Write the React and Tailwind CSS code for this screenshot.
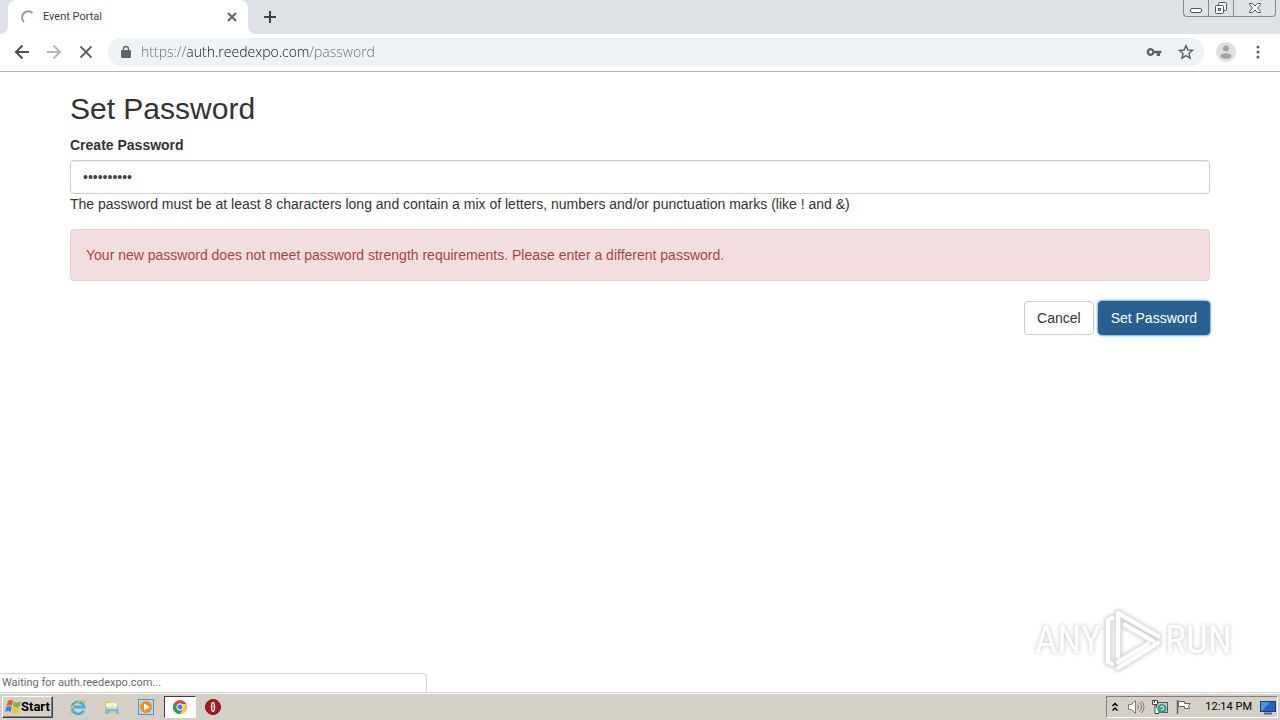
import { useState } from "react";

const uiFont = "font-[Roboto,sans-serif]";

function TabStrip() {
  return (
    <header className={`flex h-[34px] items-stretch justify-between bg-[#dee1e6] ${uiFont}`}>
      <div className="flex items-stretch">
        <div className="w-2 bg-white">
          <div className="h-full rounded-br-lg bg-[#dee1e6]" />
        </div>
        <div className="flex w-60 items-center rounded-t-lg bg-white pr-[10px] pl-3">
          <svg width="16" height="16" viewBox="0 0 16 16" fill="none" stroke="#9a9a9a" strokeWidth="2">
            <path d="M4 13A6 6 0 0 1 12.500 4" />
          </svg>
          <span className="ml-[7px] flex-1 pt-px text-[11px] text-[#3c4043]">Event Portal</span>
          <button type="button" aria-label="Close tab">
            <svg width="12" height="12" viewBox="0 0 12 12" stroke="#5f6368" strokeWidth="1.8">
              <path d="M2 2l8 8M10 2l-8 8" />
            </svg>
          </button>
        </div>
        <div className="w-2 bg-white">
          <div className="h-full rounded-bl-lg bg-[#dee1e6]" />
        </div>
        <button type="button" aria-label="New tab" className="ml-[7px]">
          <svg width="14" height="14" viewBox="0 0 14 14" stroke="#3c4043" strokeWidth="2">
            <path d="M7 1v12M1 7h12" />
          </svg>
        </button>
      </div>
      <div className="mr-1 flex h-[17px] divide-x divide-[#85888f] rounded-b border border-t-0 border-[#85888f]">
        <button type="button" aria-label="Minimize" className="flex w-[25px] justify-center">
          <svg width="14" height="16" viewBox="0 0 14 16" fill="#fff" stroke="#51555d">
            <rect x="1.500" y="8.500" width="11" height="4" rx="1.500" />
          </svg>
        </button>
        <button type="button" aria-label="Restore" className="flex w-[25px] justify-center">
          <svg width="14" height="16" viewBox="0 0 14 16" fill="#f5f6f8" stroke="#51555d">
            <rect x="4.500" y="2.500" width="8" height="8" rx="1" />
            <rect x="1.500" y="5.500" width="8" height="8" rx="1" />
            <rect x="4.500" y="8.500" width="2" height="2" />
          </svg>
        </button>
        <button type="button" aria-label="Close" className="flex w-[41px] justify-center">
          <svg width="14" height="16" viewBox="0 0 14 16" fill="#fff" stroke="#51555d">
            <path d="M1.500 3.500h3L7 6l2.500-2.500h3v1L9.500 8l3 3.500v1h-3L7 10l-2.500 2.500h-3v-1l3-3.500-3-3.500z" />
          </svg>
        </button>
      </div>
    </header>
  );
}

function Toolbar() {
  const [url, setUrl] = useState("https://auth.reedexpo.com/password");

  return (
    <nav className={`flex h-[38px] items-center border-b border-[#b4b4b4] bg-white px-[14px] pb-px ${uiFont}`}>
      <button type="button" aria-label="Back">
        <svg width="16" height="16" viewBox="0 0 16 16" fill="none" stroke="#505357" strokeWidth="2">
          <path d="M15 8H2M8.500 1.500L2 8l6.500 6.500" />
        </svg>
      </button>
      <button type="button" aria-label="Forward" className="ml-4">
        <svg width="16" height="16" viewBox="0 0 16 16" fill="none" stroke="#b5b6b8" strokeWidth="2">
          <path d="M1 8h13M7.500 1.500L14 8l-6.500 6.500" />
        </svg>
      </button>
      <button type="button" aria-label="Stop" className="ml-4">
        <svg width="16" height="16" viewBox="0 0 16 16" stroke="#5f6368" strokeWidth="1.900">
          <path d="M2.500 2.500l11 11M13.500 2.500l-11 11" />
        </svg>
      </button>
      <div className="ml-[14px] flex h-7 flex-1 items-center rounded-full bg-[#f0f3f5] pr-[10px] pl-3">
        <svg width="12" height="14" viewBox="0 0 12 14" fill="none" stroke="#5f6368">
          <rect x="1.500" y="5.500" width="9" height="7" rx=".5" fill="#5f6368" />
          <path d="M3.500 5.500V4a2.500 2.500 0 0 1 5 0v1.500" strokeWidth="1.400" />
        </svg>
        {/* the host part of the address is darker than the scheme and path */}
        <input
          type="text"
          aria-label="Address"
          value={url}
          onChange={(e) => setUrl(e.target.value)}
          className="ml-[9px] min-w-0 flex-1 bg-[linear-gradient(90deg,#65696d_47px,#101114_47px,#101114_169px,#65696d_169px)] bg-clip-text font-['Open_Sans',sans-serif] text-sm font-light text-transparent outline-none"
        />
        <button type="button" aria-label="Saved passwords">
          <svg width="16" height="16" viewBox="0 0 24 24" fill="#5f6368">
            <path d="M12.650 10A6 6 0 0 0 7 6a6 6 0 1 0 5.650 8H16v4h5v-4h2v-4H12.650zM7 14.500a2.500 2.500 0 1 1 0-5 2.500 2.500 0 0 1 0 5z" />
          </svg>
        </button>
        <button type="button" aria-label="Bookmark this page" className="ml-4">
          <svg width="16" height="16" viewBox="0 0 16 16" fill="none" stroke="#5f6368" strokeWidth="1.500">
            <path d="M8 1.700l1.900 4.300 4.600.4-3.500 3.100 1.100 4.600L8 11.700l-4.100 2.400L5 9.500 1.500 6.400l4.600-.4z" />
          </svg>
        </button>
      </div>
      <button type="button" aria-label="Profile" className="ml-3">
        <svg width="20" height="20" viewBox="0 0 20 20">
          <circle cx="10" cy="10" r="10" fill="#dfdfdf" />
          <circle cx="10" cy="6.500" r="3" fill="#a3a3a3" />
          <ellipse cx="10" cy="14" rx="5.500" ry="2.700" fill="#a3a3a3" />
        </svg>
      </button>
      <button type="button" aria-label="Menu" className="ml-[14px]">
        <svg width="16" height="16" viewBox="0 0 16 16" fill="#5f6368">
          <circle cx="8" cy="3" r="1.500" />
          <circle cx="8" cy="8" r="1.500" />
          <circle cx="8" cy="13" r="1.500" />
        </svg>
      </button>
    </nav>
  );
}

function PasswordForm() {
  const [password, setPassword] = useState("Portal2019");

  return (
    <form
      onSubmit={(e) => e.preventDefault()}
      className="mx-auto w-full max-w-[1170px] px-[15px] pt-5 font-['Liberation_Sans',Arial,sans-serif] text-sm leading-5 text-[#333]"
    >
      <h1 className="mb-[10px] text-[30px] leading-[33px]">Set Password</h1>
      <label htmlFor="password" className="mb-[5px] block font-bold">
        Create Password
      </label>
      <input
        id="password"
        type="password"
        value={password}
        onChange={(e) => setPassword(e.target.value)}
        className="block h-[34px] w-full rounded border border-[#ccc] px-3 text-sm text-[#444] shadow-[inset_0_1px_1px_rgba(0,0,0,0.075)] outline-none"
      />
      <p className="mb-[15px]">
        The password must be at least 8 characters long and contain a mix of letters, numbers and/or punctuation marks (like ! and &amp;)
      </p>
      <div role="alert" className="mb-5 rounded border border-[#ebccd1] bg-[#f2dede] p-[15px] text-[#a94442]">
        Your new password does not meet password strength requirements. Please enter a different password.
      </div>
      <div className="flex justify-end gap-1">
        <button type="button" className="h-[34px] rounded border border-[#ccc] bg-white px-3">
          Cancel
        </button>
        <button
          type="submit"
          className="h-[34px] rounded border border-[#286090] bg-[#286090] px-3 text-white shadow-[0_0_2px_1px_#66afe9]"
        >
          Set Password
        </button>
      </div>
    </form>
  );
}

function Watermark() {
  return (
    <div className="absolute right-12 bottom-5 flex items-center gap-[2px] font-['Roboto_Condensed','Liberation_Sans_Narrow',sans-serif] text-[39px] leading-none text-white drop-shadow-[0_0_2px_rgba(0,0,0,0.25)]">
      <span>ANY</span>
      <svg width="60" height="64" viewBox="0 0 60 64" fill="none" strokeLinejoin="round" strokeLinecap="round">
        <g stroke="#e2e2e2" strokeWidth="6">
          <path d="M9 10L5 12v42l4 2" />
          <path d="M15 48V5l40 23" />
          <path d="M22 17l28 16" />
          <path d="M15 60l40-25" />
          <path d="M15 54l30-18" />
        </g>
        <g stroke="#fff" strokeWidth="4">
          <path d="M9 10L5 12v42l4 2" />
          <path d="M15 48V5l40 23" />
          <path d="M22 17l28 16" />
          <path d="M15 60l40-25" />
          <path d="M15 54l30-18" />
        </g>
      </svg>
      <span>RUN</span>
    </div>
  );
}

function QuickLaunch() {
  return (
    <div className="ml-4 flex items-center">
      <button type="button" aria-label="Internet Explorer" className="mr-4">
        <svg width="18" height="18" viewBox="0 0 18 18" fill="none">
          <path d="M14.500 12.500A6 6 0 1 1 15 9H5" stroke="#45ade3" strokeWidth="2.800" />
          <path d="M3 15.500C-1 17 1 10 7 5.500S18 1 15.500 5.500" stroke="#e6bd4b" strokeWidth="1.300" />
        </svg>
      </button>
      <button type="button" aria-label="Windows Explorer" className="mr-4">
        <svg width="18" height="18" viewBox="0 0 18 18">
          <path d="M2 3h5l1 2h7v10H2z" fill="#e8c25d" />
          <path d="M3 5h11v5H3z" fill="#fff3b5" />
          <path d="M3 9h12l1 7h-3v-3H6v3H2z" fill="#6dbce0" />
          <path d="M4 9h10v2H4z" fill="#b5e5f5" />
        </svg>
      </button>
      <button type="button" aria-label="Media Player" className="mr-[9px]">
        <svg width="18" height="18" viewBox="0 0 18 18">
          <rect x="1.500" y="1.500" width="15" height="15" fill="#b5d9f0" stroke="#4f94c4" />
          <circle cx="9" cy="9" r="6" fill="#f28c19" />
          <path d="M7 5.500l6 3.500-6 3.500z" fill="#fff" />
        </svg>
      </button>
      <button
        type="button"
        aria-label="Chrome"
        className="flex h-[22px] w-8 items-center justify-center border border-t-[#404040] border-r-white border-b-white border-l-[#404040] bg-white"
      >
        <svg width="14" height="14" viewBox="0 0 14 14">
          <circle cx="7" cy="7" r="7" fill="#dd4b3e" />
          <path d="M.9 3.500A7 7 0 0 0 7 14l3-5.500-6 0z" fill="#22a45d" />
          <path d="M13.200 4A7 7 0 0 1 7 14l3-5L8 4z" fill="#fccd3b" />
          <circle cx="7" cy="7" r="3.200" fill="#4486f0" stroke="#fff" />
        </svg>
      </button>
      <button type="button" aria-label="Opera" className="ml-[9px]">
        <svg width="16" height="16" viewBox="0 0 16 16">
          <circle cx="8" cy="8" r="7.500" fill="#b5121b" stroke="#76110f" />
          <ellipse cx="8" cy="8" rx="2.200" ry="5" fill="#fff" />
          <path d="M8 4.500v7" stroke="#8c1116" strokeWidth="1.200" />
        </svg>
      </button>
    </div>
  );
}

function Tray() {
  return (
    <div className="flex h-[22px] items-center border border-t-[#808080] border-r-white border-b-white border-l-[#808080] pr-px pl-1 text-black">
      <svg width="8" height="12" viewBox="0 0 8 12" fill="none" stroke="#000" strokeWidth="1.500">
        <path d="M1.500 5L4 2.500 6.500 5M1.500 9.500L4 7l2.500 2.500" />
      </svg>
      <svg className="ml-2" width="18" height="16" viewBox="0 0 18 16" fill="none" stroke="#777">
        <path d="M1.500 5.500h3l4-4v13l-4-4h-3z" fill="#fff" />
        <path d="M10.500 5.500q2 2.500 0 5M12.500 3.500q4 4.500 0 9M14.500 2q5 6 0 12" />
      </svg>
      <svg className="ml-[7px]" width="16" height="16" viewBox="0 0 16 16" fill="none" stroke="#555">
        <rect x="4.500" y="3.500" width="11" height="10" fill="#a9d3d8" />
        <path d="M.5 1.500h5v4h-5zM3 5.500v9h4" fill="#fff" stroke="#444" />
        <path d="M2.500 1v3" stroke="#444" />
        <circle cx="10" cy="9.500" r="4" fill="#35a57c" stroke="#39839a" />
        <path d="M8 8l3-1 1 3-3 1" stroke="#d8f3e5" />
      </svg>
      <svg className="ml-2" width="16" height="16" viewBox="0 0 16 16" fill="#fff" stroke="#666">
        <path d="M1.500 1v14" strokeWidth="1.500" />
        <path d="M2.500 2.500h6v2h6l-2 2 1 3h-5v-2h-6z" />
      </svg>
      <span className="ml-[13px] pt-px text-[11px]">12:14 PM</span>
      <svg className="ml-2" width="16" height="16" viewBox="0 0 16 16">
        <rect x=".5" y="2.500" width="15" height="10" fill="#2464bd" stroke="#173d75" />
        <path d="M1 3h9L2 12H1z" fill="#5594df" />
        <path d="M4 14.500h8" stroke="#496281" strokeWidth="2" />
      </svg>
    </div>
  );
}

function Taskbar() {
  return (
    <footer className={`border-t border-[#d4d0c8] ${uiFont}`}>
      <div className="flex h-[27px] items-center justify-between border-t border-white bg-[#d4d0c8] px-[2px]">
        <div className="flex items-center">
          <button
            type="button"
            className="flex h-[22px] items-center border border-t-white border-r-[#404040] border-b-[#404040] border-l-white px-[2px] text-[13px] font-bold text-black shadow-[inset_-1px_-1px_#808080]"
          >
            <svg width="16" height="16" viewBox="0 0 16 16">
              <path d="M3 2q3-2 5 0L7 7Q5 5.500 1.500 7z" fill="#e65c27" />
              <path d="M9 2.500q3 2 7 0L14.500 8q-3 1.500-6.500-.5z" fill="#75b843" />
              <path d="M1.200 8q3-1.500 5.500 0l-1 5q-2-2-5.500 0z" fill="#3a83cb" />
              <path d="M7.700 8.500q3 2 6.500.5l-1.500 5q-3 2-6 0z" fill="#f5c22c" />
            </svg>
            Start
          </button>
          <QuickLaunch />
        </div>
        <Tray />
      </div>
    </footer>
  );
}

export default function App() {
  return (
    <div className="flex min-h-screen flex-col bg-white">
      <TabStrip />
      <Toolbar />
      <main className="relative flex-1">
        <PasswordForm />
        <Watermark />
        <div
          role="status"
          className={`absolute bottom-0 left-0 flex h-[19px] w-1/3 items-center rounded-tr border-t border-r border-[#d5d5d5] bg-white pt-px pl-[2px] text-[11px] text-[#6b6b6b] ${uiFont}`}
        >
          Waiting for auth.reedexpo.com...
        </div>
      </main>
      <Taskbar />
    </div>
  );
}
